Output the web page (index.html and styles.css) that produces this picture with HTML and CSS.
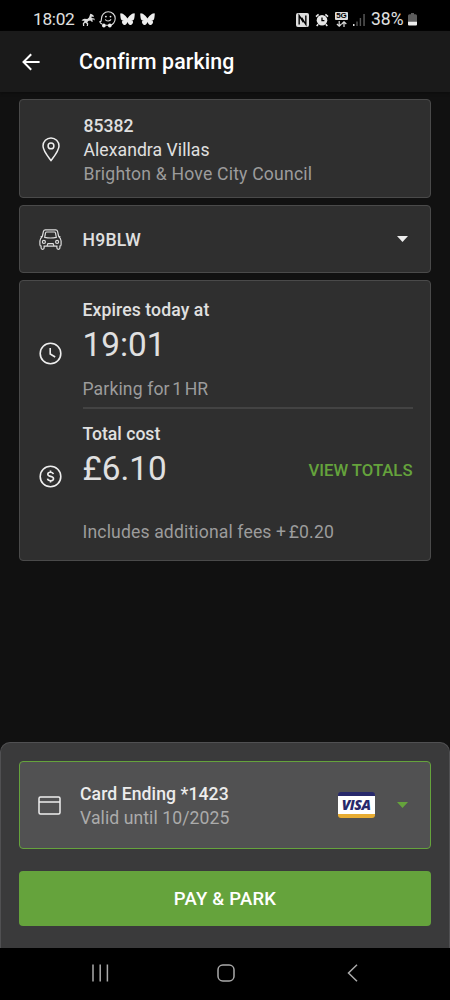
FILE: index.html
```html
<!DOCTYPE html>
<html lang="en">
<head>
<meta charset="utf-8">
<meta name="viewport" content="width=device-width, initial-scale=1">
<title>Confirm parking</title>
<link rel="stylesheet" href="styles.css">
</head>
<body>
<div class="screen">
  <div class="status">
    <div class="status-left">
      <span class="status-time">18:02</span>
      <svg class="ic-horse" width="14" height="14" viewBox="0 0 14 14"><path fill="#ddd" d="M9.300.8 11 1.200l2 1.900-.6.9-1.700-.4-.2 1.500 2.900.5.3 1.900-1.200-.9-1.700.1 1.200 1.200-.9 1.100-1.800-1.600-2.100.7-.9 1.500 1 1-.4 2.400H5.700l.3-1.900-1.700-1.300-1.200 1 .2 2.200H2l-.2-2.700 1.400-1.600.1-1.300-1.400.7L.3 8l1.500-.7-.6-.9 2.400-.6 2.700.1L8 4.500z"/></svg>
      <svg class="ic-waze" width="17" height="17" viewBox="0 0 17 17" fill="none" stroke="#ddd" stroke-width="1.100"><path d="M3.300 13.200C1.900 12.600 1 11.700.8 10.900c1.300 0 1.600-.8 1.600-3C2.400 3.700 5.400.8 9.200.8c4 0 7 3 7 6.700s-2.600 6.200-4.700 6.700M6.700 14.200h2.500"/><path d="M6.300 8.300c.7 2.200 4.900 2.300 5.700 0"/><g fill="#eee" stroke="none"><circle cx="6.900" cy="5.600" r=".9"/><circle cx="11.500" cy="5.600" r=".9"/><circle cx="4.900" cy="14.500" r="1.900"/><circle cx="10.800" cy="14.500" r="1.900"/></g></svg>
      <svg class="ic-fly" width="15" height="13" viewBox="0 0 15 13"><path fill="#eee" d="M7.500 5.600C6.500 3.400 3.300.4.900.2.200.2.200 1 .3 2c.1 1.700.4 4 1 4.700.5.700 1.500.9 2.500.8-1.900.4-2.400 1.500-1.400 2.900 2.400 3.200 4.300.8 5.100-1.400.8 2.200 2.700 4.600 5.100 1.400 1-1.400.5-2.500-1.400-2.900 1 .1 2-.1 2.500-.8.6-.7.900-3 1-4.700.1-1 .1-1.800-.6-1.800-2.400.2-5.600 3.200-6.600 5.400z"/></svg>
      <svg class="ic-fly" width="15" height="13" viewBox="0 0 15 13"><path fill="#eee" d="M7.500 5.600C6.500 3.400 3.300.4.900.2.200.2.200 1 .3 2c.1 1.700.4 4 1 4.700.5.700 1.500.9 2.500.8-1.900.4-2.400 1.500-1.400 2.900 2.400 3.200 4.300.8 5.100-1.400.8 2.200 2.700 4.600 5.100 1.400 1-1.400.5-2.500-1.400-2.900 1 .1 2-.1 2.500-.8.6-.7.900-3 1-4.700.1-1 .1-1.800-.6-1.800-2.400.2-5.600 3.200-6.600 5.400z"/></svg>
    </div>
    <div class="status-right">
      <svg class="ic-nfc" width="13" height="14" viewBox="0 0 14 14" preserveAspectRatio="none"><rect width="14" height="14" rx="2" fill="#ddd"/><path d="M3.400 11.500V2.600L8 9.200M6 4.600l4.600 6.700V2.400" fill="none" stroke="#000" stroke-width="1.500"/></svg>
      <svg class="ic-alarm" width="14" height="14" viewBox="0 0 14 14"><circle cx="7" cy="7.300" r="5.300" fill="#e6e6e6"/><path d="M1 3.600 3.600 1.300M13 3.600l-2.600-2.300M3.200 11.300l-1.500 1.700M10.800 11.300l1.500 1.700" stroke="#e6e6e6" stroke-width="1.600"/><path d="M7 4.400v3.200h2.400" fill="none" stroke="#000" stroke-width="1.300"/></svg>
      <div class="net">
        <span class="net-label">5G</span>
        <svg width="11" height="6" viewBox="0 0 11 6" fill="none" stroke="#ddd" stroke-width="1.200"><path d="M3.200 0v5M.9 3l2.300 2.200L5.500 3M8 6V1M5.800 3 8 .8 10.300 3"/></svg>
      </div>
      <svg class="ic-signal" width="12" height="12" viewBox="0 0 12 12"><path fill="#ddd" d="M0 10h1.500v2H0z"/><path fill="#555" d="M3.300 7.500h1.400V12H3.300zM6.700 4h1.400v8H6.700zM10.300 0h1.500v12h-1.500z"/></svg>
      <span class="status-pct">38%</span>
      <svg class="ic-batt" width="9" height="13" viewBox="0 0 9 13"><path fill="#5c5c5c" d="M3 0h3v1.300h1.500q1.500 0 1.500 1.500V9H0V2.800q0-1.500 1.500-1.500H3z"/><path fill="#eee" d="M0 8.800h9v2.700q0 1-1 1H1q-1 0-1-1z"/></svg>
    </div>
  </div>

  <header class="appbar">
    <svg class="back" width="18" height="18" viewBox="0 0 18 18" fill="none" stroke="#fff" stroke-width="2"><path d="M17.600 9H1.500M9.200 1.300 1.500 9l7.700 7.700"/></svg>
    <h1 class="title">Confirm parking</h1>
  </header>

  <main class="content">
    <section class="card place">
      <div class="icon"><svg width="18" height="25" viewBox="0 0 18 25" fill="none" stroke="#eee" stroke-width="1.500"><path d="M9 23.600C6 19.600 1 13.600 1 9a8 8 0 0 1 16 0c0 4.600-5 10.600-8 14.600z"/><circle cx="9" cy="8.900" r="2.900"/></svg></div>
      <div class="lines">
        <div class="strong">85382</div>
        <div class="street">Alexandra Villas</div>
        <div class="muted council">Brighton &amp; Hove City Council</div>
      </div>
    </section>

    <section class="card vehicle">
      <div class="icon"><svg width="23" height="21" viewBox="0 0 23 21" fill="none" stroke="#ddd" stroke-width="1.200"><path d="M3.300 7.500 4.500 2.200Q4.900.8 6.300.8h10.400q1.400 0 1.800 1.400l1.200 5.300M3.300 7.500H1.600M19.700 7.500h1.700M3.300 7.500Q.9 9.500.9 12v3.500q0 1.600 1.200 1.600v2q0 1.200 1.500 1.200t1.500-1.200v-2h12.800v2q0 1.200 1.500 1.200t1.500-1.200v-2q1.200 0 1.200-1.600V12q0-2.500-2.400-4.500"/><path d="M5.700 8.300 6.500 4q.2-1 1.200-1h7.600q1 0 1.200 1l.8 4.300q-5.800 1.400-11.600 0zM8 17l.9-2.400h5.200L15 17"/><circle cx="4.900" cy="12.900" r="1.500"/><circle cx="18.100" cy="12.900" r="1.500"/></svg></div>
      <div class="strong plate">H9BLW</div>
      <svg class="caret" width="11" height="6" viewBox="0 0 11 6"><path fill="#eee" d="M0 0h11L5.500 6z"/></svg>
    </section>

    <section class="card summary">
      <div class="row expiry">
        <div class="icon"><svg width="23" height="23" viewBox="0 0 23 23" fill="none" stroke="#eee" stroke-width="1.600"><circle cx="11.500" cy="11.500" r="10.300"/><path d="M11.200 6v6l5 3"/></svg></div>
        <div class="detail">
          <div class="strong expires">Expires today at</div>
          <div class="big">19:01</div>
          <div class="muted note">Parking for<span class="thin"></span>1<span class="thin"></span>HR</div>
        </div>
      </div>
      <div class="row cost">
        <div class="icon"><svg width="23" height="23" viewBox="0 0 23 23" fill="none" stroke="#eee" stroke-width="1.600"><circle cx="11.500" cy="11.500" r="10.300"/><path d="M14.300 9.200q-.4-1.900-2.800-1.900-2.700 0-2.700 2 0 1.500 2.700 2.100 3 .6 3 2.300 0 2-3 2-2.600 0-3-2M11.500 5.500v1.800M11.500 15.700v1.800"/></svg></div>
        <div class="detail">
          <div class="strong">Total cost</div>
          <div class="amount"><span class="big">£6.10</span><a class="link">VIEW TOTALS</a></div>
          <div class="muted fees">Includes additional fees +<span class="thin"></span>£0.20</div>
        </div>
      </div>
    </section>
  </main>

  <footer class="sheet">
    <div class="payment">
      <div class="icon"><svg width="23" height="19" viewBox="0 0 23 19" fill="none" stroke="#eee" stroke-width="1.500"><rect x="1" y="1" width="21" height="17" rx="1.500"/><path d="M1 6h21"/></svg></div>
      <div class="lines">
        <div class="strong">Card Ending *1423</div>
        <div class="muted">Valid until 10/2025</div>
      </div>
      <div class="visa"><span>VISA</span></div>
      <svg class="caret" width="11" height="6" viewBox="0 0 11 6"><path fill="#65a33c" d="M0 0h11L5.500 6z"/></svg>
    </div>
    <button class="pay">PAY &amp; PARK</button>
  </footer>

  <nav class="nav">
    <svg width="17" height="18" viewBox="0 0 17 18" stroke="#aaa" stroke-width="1.500"><path d="M1 .5v17M8.200.5v17M15.400.5v17"/></svg>
    <svg class="home" width="18" height="18" viewBox="0 0 18 18" fill="none" stroke="#aaa" stroke-width="1.500"><rect x="1" y="1" width="16" height="16" rx="4.800"/></svg>
    <svg width="11" height="18" viewBox="0 0 11 18" fill="none" stroke="#aaa" stroke-width="1.500"><path d="M10 .8 1.500 9l8.500 8.200"/></svg>
  </nav>
</div>
</body>
</html>
```
FILE: styles.css
```css
* { box-sizing: border-box; }
body {
  margin: 0;
  background: #111;
  color: #e0e0e0;
  font: 400 17.6px/24px Roboto, sans-serif;
}
svg { display: block; flex: none; }
.screen { width: 450px; height: 1000px; display: flex; flex-direction: column; overflow: hidden; }

.status {
  height: 31px;
  background: #000;
  display: flex;
  justify-content: space-between;
  padding: 8px 33px 0 33px;
}
.status-left, .status-right { display: flex; align-items: center; height: 23px; }
.status-time { font-size: 17.3px; letter-spacing: -0.3px; width: 48px; }
.status-time, .status-pct { line-height: 23px; white-space: nowrap; }
.ic-waze { margin-left: 4px; }
.ic-fly { margin-left: 4px; }
.ic-fly + .ic-fly { margin-left: 5px; }
.ic-alarm { margin-left: 6px; }
.net { width: 13px; margin-left: 6px; display: flex; flex-direction: column; align-items: center; gap: 1px; }
.net-label {
  width: 13px;
  height: 8px;
  background: #ddd;
  color: #000;
  border-radius: 1px;
  font: 700 8px/8px "Liberation Sans", sans-serif;
  text-align: center;
}
.ic-signal { margin-left: 5px; }
.status-pct { font-size: 17.5px; margin-left: 6px; width: 36px; }
.ic-batt { margin-left: 1px; }

.appbar {
  height: 61px;
  background: #1a1a1a;
  display: flex;
  align-items: center;
  padding: 1px 0 0 21.5px;
  box-shadow: 0 1px 3px #0c0c0c;
}
.title { margin: 0 0 0 39.5px; font-size: 21.3px; letter-spacing: 0.12px; font-weight: 500; line-height: 28px; color: #fff; }

.content { flex: 1; padding: 7px 19px 0; display: flex; flex-direction: column; gap: 7px; }
.card { background: #2f2f2f; border: 1px solid #4a4a4a; border-radius: 4px; }
.icon { width: 62.5px; padding-right: 2px; flex: none; display: flex; justify-content: center; }
.strong { font-weight: 500; }
.muted { color: #9c9c9c; }
.thin { display: inline-block; width: 2.5px; }

.place { height: 99px; display: flex; align-items: center; padding-top: 1px; }
.place .lines { padding: 2px 0 0 1px; }
.place .icon { padding-right: 1px; }
.street { letter-spacing: 0.05px; }
.council { letter-spacing: 0.2px; }
.vehicle { height: 68px; display: flex; align-items: center; padding-right: 22.5px; }
.plate { padding-top: 2px; letter-spacing: 0.2px; }
.vehicle .caret { margin-left: auto; }

.summary { height: 281px; padding: 17px 17px 0 0; }
.row { display: flex; }
.detail { flex: 1; }
.big { font-size: 33.3px; line-height: 40px; font-weight: 400; }
.expires { letter-spacing: 0.1px; }
.expiry .icon { padding-top: 43.5px; }
.expiry .detail { height: 111px; border-bottom: 2px solid #434343; }
.expiry .big { margin-top: 2.5px; }
.note { margin-top: 12px; letter-spacing: 0.12px; }
.cost .icon { padding-top: 56px; }
.cost .detail { padding-top: 13px; }
.amount { display: flex; justify-content: space-between; align-items: center; margin-top: 2.5px; }
.link { color: #65a33c; font-size: 16.7px; font-weight: 500; padding: 5px 0.5px 0 0; }
.fees { margin-top: 31.5px; letter-spacing: 0.14px; }

.sheet {
  height: 206px;
  flex: none;
  padding: 18px 18px 0;
  background: #3a3a3b;
  border: 1px solid #505052;
  border-bottom: 0;
  border-radius: 10px 10px 0 0;
}
.payment {
  height: 88px;
  display: flex;
  align-items: center;
  padding-right: 22.5px;
  background: #515152;
  border: 1.5px solid #65a33c;
  border-radius: 4px;
}
.payment .icon { width: 60px; }
.payment .lines { padding-top: 2px; letter-spacing: 0.08px; }
.payment .muted { color: #ababab; }
.payment .strong { color: #ececec; }
.payment .caret { margin-left: 22px; }
.visa {
  width: 37px;
  height: 26px;
  margin-left: auto;
  display: flex;
  align-items: center;
  justify-content: center;
  background: #fff;
  border-top: 4px solid #28296b;
  border-bottom: 4px solid #e7ac32;
  border-radius: 3px;
}
.visa span { font: italic 800 14px/18px "Open Sans", sans-serif; letter-spacing: -0.5px; color: #28296b; }
.pay {
  display: block;
  width: 100%;
  height: 55px;
  margin-top: 21.5px;
  padding: 2px 0 0;
  border: 0;
  border-radius: 4px;
  background: #65a33c;
  color: #fff;
  font: 500 18.5px/24px Roboto, sans-serif;
  letter-spacing: 0.25px;
}

.nav { height: 52px; flex: none; background: #000; display: flex; align-items: center; padding: 0 92px 2px; justify-content: space-between; }
.home { margin-right: 4px; }
```
